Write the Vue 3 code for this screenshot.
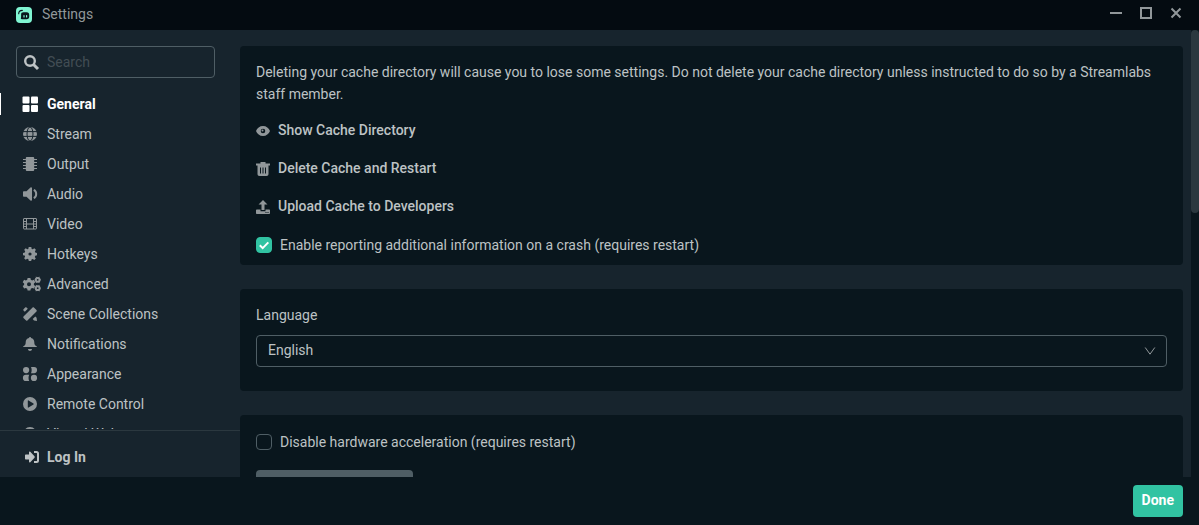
<script setup>
import { ref } from 'vue'

const query = ref('')
const active = ref('General')
const reportCrashes = ref(true)
const disableAcceleration = ref(false)
const language = ref('English')

const items = [
  { name: 'General', icon: 'grid' },
  { name: 'Stream', icon: 'globe' },
  { name: 'Output', icon: 'chip' },
  { name: 'Audio', icon: 'speaker' },
  { name: 'Video', icon: 'film' },
  { name: 'Hotkeys', icon: 'gear' },
  { name: 'Advanced', icon: 'gears' },
  { name: 'Scene Collections', icon: 'tools' },
  { name: 'Notifications', icon: 'bell' },
  { name: 'Appearance', icon: 'shapes' },
  { name: 'Remote Control', icon: 'play' },
  { name: 'Virtual Webcam', icon: 'webcam' },
]
</script>

<template>
  <div class="window">
    <header class="titlebar">
      <svg class="logo" viewBox="0 0 16 16" aria-hidden="true">
        <rect width="16" height="16" rx="4" fill="#80f5d2" />
        <path d="M2.700 6.700C2.700 4.600 4.100 3.400 6.300 3.400" fill="none" stroke="#09161d" stroke-width="1.1" stroke-linecap="round" />
        <path d="M7.500 5.300h3.200c1.800 0 2.500.8 2.500 2.600v1.600c0 2-.8 2.700-2.600 2.700H5.800c-.8 0-1.100-.4-.9-1.100.2-.6.2-1 .2-2.100V7.700c0-1.700.7-2.400 2.400-2.400z" fill="#09161d" />
        <path d="M8 8.500v1.500M10.600 8.500v1.500" stroke="#80f5d2" stroke-width="1.200" stroke-linecap="round" />
      </svg>
      <span class="title">Settings</span>
      <div class="controls">
        <button type="button" aria-label="Minimize">
          <svg viewBox="0 0 12 12"><path d="M0 6h12" /></svg>
        </button>
        <button type="button" aria-label="Maximize">
          <svg viewBox="0 0 12 12"><path d="M1 1h10v10H1z" /></svg>
        </button>
        <button type="button" aria-label="Close">
          <svg viewBox="0 0 12 12"><path d="M1.500 1.500l9 9M10.500 1.500l-9 9" /></svg>
        </button>
      </div>
    </header>

    <div class="body">
      <aside class="sidebar">
        <label class="search">
          <svg viewBox="0 0 15 15" aria-hidden="true">
            <circle cx="6" cy="6" r="4.800" fill="none" stroke="currentColor" stroke-width="2.400" />
            <path d="M9.500 9.500L14 14" stroke="currentColor" stroke-width="3" />
          </svg>
          <input v-model="query" type="text" placeholder="Search" aria-label="Search" />
        </label>

        <nav class="menu">
          <button
            v-for="item in items"
            :key="item.name"
            type="button"
            class="item"
            :class="{ active: item.name === active }"
            @click="active = item.name"
          >
            <svg class="icon" viewBox="0 0 14 14" aria-hidden="true">
              <g v-if="item.icon === 'grid'">
                <rect x="-.5" y="-.5" width="7" height="7" rx="1" />
                <rect x="8" y="-.5" width="7" height="7" rx="1" />
                <rect x="-.5" y="8" width="7" height="7" rx="1" />
                <rect x="8" y="8" width="7" height="7" rx="1" />
              </g>
              <g v-else-if="item.icon === 'globe'">
                <circle cx="7" cy="7" r="7" />
                <g class="cut"><ellipse cx="7" cy="7" rx="3" ry="7" /><path d="M0 4.600h14M0 9.400h14" /></g>
              </g>
              <g v-else-if="item.icon === 'chip'">
                <rect x="2.800" y="0" width="8.400" height="14" rx="1" />
                <path class="line" d="M0 2.500h14M0 5.500h14M0 8.500h14M0 11.500h14" />
              </g>
              <g v-else-if="item.icon === 'speaker'">
                <path d="M.8 4.300h2.700L7.500.5c.6-.5 1.500-.2 1.500.6v11.800c0 .8-.9 1.100-1.500.6L3.500 9.700H.8c-.5 0-.8-.3-.8-.8V5.100c0-.5.3-.8.8-.8z" />
                <path class="wave" d="M10.800 2.900c3.200 1.600 3.200 6.600 0 8.200" />
              </g>
              <g v-else-if="item.icon === 'film'">
                <rect class="line" x=".5" y="1.500" width="13" height="10.500" rx=".5" />
                <path class="line" d="M3.500 2v10M10.500 2v10M3.500 7h7M.5 4.500h3M.5 7h3M.5 9.500h3M10.500 4.500h3M10.500 7h3M10.500 9.500h3" />
              </g>
              <g v-else-if="item.icon === 'gear'">
                <path fill-rule="evenodd" d="M5.700 0h2.600l.4 1.900 1.100.4L11.300 1.200l1.600 1.600-1 1.700.4 1.100 1.700.3v2.400l-1.700.4-.5 1.200 1 1.500-1.500 1.500-1.600-1-1.200.5L8.200 14H5.800l-.4-1.700-1.200-.5-1.500 1-1.600-1.600 1-1.500-.4-1.200L0 8.200V5.900l1.800-.4.4-1.100-1-1.700 1.500-1.500 1.600 1.100 1-.4zM7 5.400a1.600 1.600 0 1 0 0 3.200 1.600 1.600 0 0 0 0-3.200z" />
              </g>
              <g v-else-if="item.icon === 'gears'">
                <path fill-rule="evenodd" d="M4.600.9h2.800l.4 1.800 1.300.7 1.800-.6 1.400 2.500-1.400 1.200v1.400l1.400 1.200-1.400 2.500-1.800-.6-1.300.7-.4 1.800H4.600l-.4-1.800-1.300-.7-1.800.6L-.3 9.100l1.400-1.200V6.500L-.3 5.300l1.400-2.500 1.800.6 1.300-.7zM6 5.200a2 2 0 1 0 0 4 2 2 0 0 0 0-4z" />
                <circle class="ring" cx="14.700" cy="2.800" r="1.900" />
                <circle class="ring" cx="14.700" cy="11.200" r="1.900" />
                <path class="line" d="M13.200-.2l.6 1.100M16.200-.2l-.6 1.100M11.700 2.800h1M16.700 2.800h1M13.200 5.800l.6-1.100M16.200 5.800l-.6-1.100M13.200 8.200l.6 1.100M16.200 8.200l-.6 1.100M11.700 11.200h1M16.700 11.200h1M13.200 14.200l.6-1.100M16.200 14.200l-.6-1.100" />
              </g>
              <g v-else-if="item.icon === 'tools'">
                <path d="M9.600.5c.4-.4.9-.4 1.300 0l2.600 2.600c.4.4.4.900 0 1.300l-9.100 9.100c-.4.400-.9.400-1.300 0l-2.600-2.600c-.4-.4-.4-.9 0-1.300z" />
                <path d="M.5 2.200L2.200.5c.4-.4.9-.4 1.300 0l1.300 1.300-3 3L.5 3.500c-.4-.4-.4-.9 0-1.300zM9.700 12.100l2.600-2.600 1.300 1.300.4 3.200-3-.6z" />
              </g>
              <path v-else-if="item.icon === 'bell'" d="M7 0c.6 0 1 .4 1 .9 2.200.5 3.300 2.200 3.300 4.300 0 2.500.7 3.200 1.900 3.900.5.300.8.600.8 1H0c0-.4.300-.7.8-1 1.200-.7 1.900-1.400 1.900-3.900C2.700 3.100 3.800 1.400 6 .9 6 .4 6.400 0 7 0zM5 12h4c0 1.200-.9 2-2 2s-2-.8-2-2z" />
              <g v-else-if="item.icon === 'shapes'">
                <circle cx="3.100" cy="3.100" r="3.100" />
                <path d="M8 0h3a3.100 3.100 0 0 1 0 6.200H8c.9-2 .9-4.200 0-6.200zM3 7.800h3.200c-.9 2-.9 4.200 0 6.200H3a3.100 3.100 0 0 1 0-6.200z" />
                <circle cx="11" cy="10.900" r="3.100" />
              </g>
              <path v-else-if="item.icon === 'play'" fill-rule="evenodd" d="M7 0a7 7 0 1 1 0 14A7 7 0 0 1 7 0zM4.800 3.800v6.400c0 .4.400.6.700.4l5-3.200c.3-.2.3-.6 0-.8l-5-3.200c-.3-.2-.7 0-.7.4z" />
              <path v-else d="M7 0a6 6 0 0 1 3 11.200l2 2.800H2l2-2.800A6 6 0 0 1 7 0z" />
            </svg>
            <span>{{ item.name }}</span>
          </button>
        </nav>

        <button type="button" class="login">
          <svg viewBox="0 0 14 14" aria-hidden="true">
            <path d="M0 5.200c0-.4.300-.7.700-.7H4V2.300c0-.7.800-1 1.300-.5l4.200 4.500c.4.400.4 1 0 1.400l-4.200 4.500c-.5.5-1.300.2-1.300-.5V9.500H.7C.3 9.500 0 9.200 0 8.800z" />
            <path d="M9 2h2.500c1 0 1.500.5 1.500 1.500v7c0 1-.5 1.500-1.500 1.500H9" fill="none" stroke="currentColor" stroke-width="2" />
          </svg>
          <span>Log In</span>
        </button>
      </aside>

      <main class="content">
        <section class="card cache">
          <p>
            Deleting your cache directory will cause you to lose some settings. Do not delete your
            cache directory unless instructed to do so by a Streamlabs staff member.
          </p>
          <a class="action" href="#">
            <svg viewBox="0 0 14 14" aria-hidden="true">
              <path fill-rule="evenodd" d="M7 2c3.300 0 5.900 2.100 7 5-1.100 2.900-3.700 5-7 5s-5.900-2.100-7-5c1.100-2.900 3.700-5 7-5zm0 2.700a2.300 2.300 0 1 0 0 4.600 2.300 2.300 0 0 0 0-4.600z" />
              <circle cx="6.500" cy="6.500" r="1" />
            </svg>
            <span>Show Cache Directory</span>
          </a>
          <a class="action" href="#">
            <svg viewBox="0 0 14 14" aria-hidden="true">
              <path fill-rule="evenodd" d="M4.500 0h5v1.500H14v2h-1.500V12c0 1.300-.7 2-2 2h-7c-1.300 0-2-.7-2-2V3.500H0v-2h4.500zM4 5.500v6h1v-6zm2.500 0v6h1v-6zm2.500 0v6h1v-6z" />
            </svg>
            <span>Delete Cache and Restart</span>
          </a>
          <a class="action" href="#">
            <svg viewBox="0 0 14 14" aria-hidden="true">
              <path d="M7 0l4.500 4.500h-3V10h-3V4.500h-3z" />
              <path fill-rule="evenodd" d="M1 9.500h3.500v1.700h5V9.500H13c.6 0 1 .4 1 1V13c0 .6-.4 1-1 1H1c-.6 0-1-.4-1-1v-2.500c0-.6.4-1 1-1zM9.500 12v1h1v-1zm2 0v1h1v-1z" />
            </svg>
            <span>Upload Cache to Developers</span>
          </a>
          <label class="check">
            <input v-model="reportCrashes" type="checkbox" />
            <svg viewBox="0 0 16 16" aria-hidden="true"><path d="M3.800 8.200l2.900 2.900 5.600-5.700" /></svg>
            <span>Enable reporting additional information on a crash (requires restart)</span>
          </label>
        </section>

        <section class="card language">
          <label for="language">Language</label>
          <div class="select">
            <select id="language" v-model="language">
              <option>English</option>
            </select>
            <svg viewBox="0 0 12 12" aria-hidden="true"><path d="M1.200 2.500L6 9.200l4.800-6.700" /></svg>
          </div>
        </section>

        <section class="card">
          <label class="check">
            <input v-model="disableAcceleration" type="checkbox" />
            <svg viewBox="0 0 16 16" aria-hidden="true"><path d="M3.800 8.200l2.900 2.900 5.600-5.700" /></svg>
            <span>Disable hardware acceleration (requires restart)</span>
          </label>
          <button type="button" class="secondary" aria-label="Run setup"></button>
        </section>
      </main>

      <div class="track"><div class="thumb"></div></div>
    </div>

    <footer class="footer">
      <button type="button" class="done">Done</button>
    </footer>
  </div>
</template>

<style>
body {
  margin: 0;
  background: #09161d;
}
</style>

<style scoped>
.window {
  display: flex;
  flex-direction: column;
  height: 100vh;
  overflow: hidden;
  background: #09161d;
  color: #bdc2c4;
  font: 14px/22px Roboto, sans-serif;
}
.window * {
  box-sizing: border-box;
}
button {
  border: 0;
  background: none;
  color: inherit;
  font: inherit;
  padding: 0;
  text-align: left;
}
svg {
  display: block;
  flex: none;
  fill: currentColor;
  overflow: visible;
}
.titlebar {
  display: flex;
  align-items: center;
  flex: none;
  height: 30px;
  padding: 0 16px;
  gap: 10px;
  background: #040b11;
  color: #91979a;
}
.logo {
  width: 16px;
  height: 16px;
}
.title {
  flex: 1;
  line-height: 28px;
  height: 30px;
}
.controls {
  display: flex;
  gap: 18px;
  height: 30px;
  padding: 7px 1px 0 0;
}
.controls svg {
  width: 12px;
  height: 12px;
  fill: none;
  stroke: currentColor;
  stroke-width: 2;
}
.controls button {
  height: 12px;
}
.body {
  display: flex;
  flex: 1;
  min-height: 0;
  background: #17242d;
}
.sidebar {
  display: flex;
  flex-direction: column;
  flex: none;
  width: 240px;
}
.search {
  display: flex;
  align-items: center;
  flex: none;
  gap: 8px;
  height: 32px;
  margin: 16px 25px 11px 16px;
  padding: 0 7px;
  border: 1px solid #4f5e65;
  border-radius: 4px;
}
.search svg {
  width: 15px;
  height: 15px;
}
.search input {
  flex: 1;
  min-width: 0;
  padding: 0;
  border: 0;
  outline: 0;
  background: none;
  color: inherit;
  font: inherit;
}
.search input::placeholder {
  color: #424d54;
  opacity: 1;
}
.menu {
  flex: 1;
  min-height: 0;
  margin-bottom: 1px;
  overflow: hidden;
}
.item {
  display: flex;
  align-items: center;
  gap: 10px;
  width: 100%;
  height: 22px;
  margin: 4px 0 8px;
  padding-left: 23px;
}
.icon {
  width: 14px;
  height: 14px;
  color: #91979a;
}
.cut {
  fill: none;
  stroke: #17242d;
  stroke-width: 1;
}
.line {
  fill: none;
  stroke: currentColor;
  stroke-width: 1;
}
.wave {
  fill: none;
  stroke: currentColor;
  stroke-width: 2;
}
.ring {
  fill: none;
  stroke: currentColor;
  stroke-width: 2;
}
.item.active {
  padding-left: 22px;
  border-left: 1px solid #fff;
  color: #fff;
  font-weight: 700;
}
.item.active .icon {
  color: #fff;
}
.login {
  display: flex;
  align-items: center;
  flex: none;
  gap: 8px;
  height: 47px;
  padding: 6px 0 0 25px;
  border-top: 1px solid #2b383f;
  font-weight: 700;
}
.login svg {
  width: 14px;
  height: 14px;
}
.content {
  display: flex;
  flex-direction: column;
  flex: 1;
  min-width: 0;
  gap: 24px;
  padding: 16px 8px 0 0;
  overflow: hidden;
}
.card {
  flex: none;
  padding: 16px;
  border-radius: 4px;
  background: #09161d;
}
.cache {
  padding: 15px 16px 9px;
}
.cache p {
  margin: 0 0 14px;
}
.action {
  display: flex;
  align-items: center;
  gap: 8px;
  margin-bottom: 16px;
  color: inherit;
  font-weight: 500;
  text-decoration: none;
}
.action svg {
  width: 14px;
  height: 14px;
  margin-top: 2px;
  color: #91979a;
}
.cache .check {
  margin-top: 17px;
}
.check {
  display: grid;
  grid-template-columns: 16px 1fr;
  align-items: center;
  column-gap: 8px;
}
.check input {
  grid-area: 1 / 1;
  width: 16px;
  height: 16px;
  margin: 0;
  appearance: none;
  border: 1px solid #4f5e65;
  border-radius: 4px;
}
.check svg {
  grid-area: 1 / 1;
  width: 16px;
  height: 16px;
  fill: none;
  stroke: #fff;
  stroke-width: 2;
  visibility: hidden;
}
.check input:checked {
  border-color: #31c3a2;
  background: #31c3a2;
}
.check input:checked + svg {
  visibility: visible;
}
.language {
  padding: 15px 16px 24px;
}
.language > label {
  display: block;
  margin-bottom: 9px;
}
.select {
  display: grid;
  align-items: center;
}
.select select {
  grid-area: 1 / 1;
  width: 100%;
  height: 32px;
  padding: 0 11px 2px;
  appearance: none;
  border: 1px solid #4f5e65;
  border-radius: 4px;
  background: none;
  color: inherit;
  font: inherit;
}
.select svg {
  grid-area: 1 / 1;
  justify-self: end;
  width: 12px;
  height: 12px;
  margin-right: 11px;
  fill: none;
  stroke: #91979a;
  pointer-events: none;
}
.secondary {
  display: block;
  width: 157px;
  height: 32px;
  margin-top: 17px;
  border-radius: 4px;
  background: #4f5e65;
}
.track {
  flex: none;
  width: 8px;
  background: #09161d;
}
.thumb {
  height: 41%;
  border-radius: 4px;
  background: #2b383f;
}
.footer {
  display: flex;
  justify-content: flex-end;
  align-items: center;
  flex: none;
  height: 48px;
  padding: 0 16px;
}
.done {
  height: 32px;
  padding: 0 9px 2px;
  border-radius: 4px;
  background: #31c3a2;
  color: #fff;
  font-weight: 700;
  text-align: center;
}
</style>
